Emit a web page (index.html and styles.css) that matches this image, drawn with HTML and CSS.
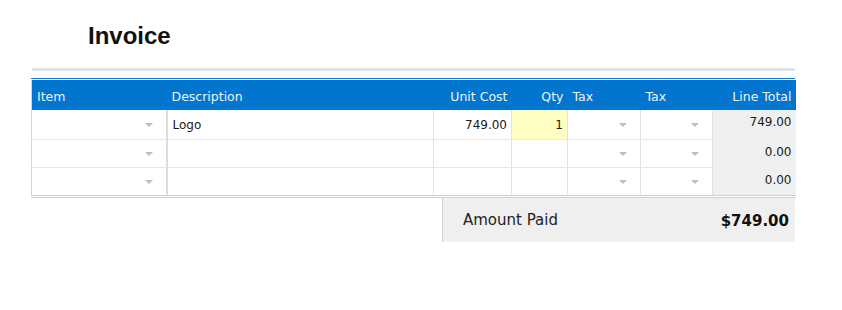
FILE: index.html
```html
<!DOCTYPE html>
<html>
<head>
	<meta charset="utf-8">
	<title>Invoice</title>
	<link rel="stylesheet" href="styles.css">
</head>
<body>
	<div id="pagina">
		<h1 id="titulo">Invoice</h1>
		<div class="barra"></div>
		<div class="linha-azul"></div>

		<table id="itens">
			<colgroup>
				<col class="c-item"><col class="c-desc"><col class="c-custo"><col class="c-qtd">
				<col class="c-taxa"><col class="c-taxa2"><col class="c-total">
			</colgroup>
			<thead>
				<tr>
					<th>Item</th>
					<th>Description</th>
					<th class="dir">Unit Cost</th>
					<th class="dir">Qty</th>
					<th>Tax</th>
					<th>Tax</th>
					<th class="dir">Line Total</th>
				</tr>
			</thead>
			<tbody>
				<tr class="primeira">
					<td class="seletor"><span class="seta"></span></td>
					<td>Logo</td>
					<td class="dir">749.00</td>
					<td class="dir qtd-ativa">1</td>
					<td class="seletor taxa"><span class="seta"></span></td>
					<td class="seletor taxa"><span class="seta"></span></td>
					<td class="total">749.00</td>
				</tr>
				<tr>
					<td class="seletor"><span class="seta"></span></td>
					<td></td>
					<td class="dir"></td>
					<td class="dir"></td>
					<td class="seletor taxa"><span class="seta"></span></td>
					<td class="seletor taxa"><span class="seta"></span></td>
					<td class="total">0.00</td>
				</tr>
				<tr class="ultima">
					<td class="seletor"><span class="seta"></span></td>
					<td></td>
					<td class="dir"></td>
					<td class="dir"></td>
					<td class="seletor taxa"><span class="seta"></span></td>
					<td class="seletor taxa"><span class="seta"></span></td>
					<td class="total">0.00</td>
				</tr>
			</tbody>
		</table>

		<div id="pago">
			<span>Amount Paid</span>
			<strong>$749.00</strong>
		</div>
	</div>
</body>
</html>
```

FILE: styles.css
```css
* {
	box-sizing: border-box;
}

body {
	margin: 0;
	background: #fff;
	font-family: "DejaVu Sans", Verdana, sans-serif;
	color: #222;
}

#pagina {
	width: 764px;
	margin-left: 31px;
}

#titulo {
	font-family: "Liberation Sans", Arial, sans-serif;
	font-size: 24px;
	font-weight: bold;
	line-height: 28px;
	color: #111;
	margin: 0;
	padding: 22px 0 0 57px;
	height: 68px;
}

.barra {
	height: 3px;
	margin-left: 1px;
	background-color: #e2e3e6;
}

.linha-azul {
	height: 1px;
	margin-top: 7px;
	margin-bottom: 1px;
	background-color: #1a7fd4;
}

#itens {
	width: 764px;
	border-collapse: collapse;
	table-layout: fixed;
	font-size: 12px;
	border-left: 1px solid #d4d4d4;
	border-bottom: 3px double #d0d0d0;
}

.c-item { width: 135px; }
.c-desc { width: 267px; }
.c-custo { width: 78px; }
.c-qtd { width: 56px; }
.c-taxa { width: 73px; }
.c-taxa2 { width: 72px; }
.c-total { width: 83px; }

#itens th {
	height: 30px;
	background-color: #0275cf;
	color: #eef4fb;
	font-size: 12.5px;
	font-weight: normal;
	text-align: left;
	padding: 2px 5px 0;
}

#itens th.dir {
	text-align: right;
	padding-right: 4px;
}

#itens td {
	height: 28px;
	padding: 0 5px;
	border-left: 1px solid #e2e2e2;
	border-bottom: 1px solid #e8e8e8;
	color: #1a1a1a;
}

#itens tr.primeira td {
	height: 29px;
	padding-top: 1px;
}

#itens tr.ultima td {
	height: 29px;
}

#itens td:first-child {
	border-left: none;
}

#itens td:nth-child(2) {
	border-left: 2px solid #dedede;
}

#itens td.dir {
	text-align: right;
	padding-right: 4px;
}

#itens td.qtd-ativa {
	background-color: #ffffc4;
}

#itens td.seletor {
	text-align: right;
	padding-right: 13px;
}

#itens tr td.total {
	background-color: #efefef;
	text-align: right;
	vertical-align: top;
	padding: 5px 4px 0 0;
	border-bottom-color: #efefef;
}

.seta {
	display: inline-block;
	width: 0;
	height: 0;
	border-left: 4px solid transparent;
	border-right: 4px solid transparent;
	border-top: 4px solid #bdbdbd;
	vertical-align: middle;
}

#pago {
	display: flex;
	justify-content: space-between;
	align-items: center;
	width: 353px;
	height: 44px;
	margin-left: auto;
	padding: 0 6px 0 20px;
	background-color: #efefef;
	border-left: 1px solid #d0d0d0;
	font-size: 15px;
}

#pago span {
	color: #222;
}

#pago strong {
	color: #111;
	margin-top: 2px;
}
```
